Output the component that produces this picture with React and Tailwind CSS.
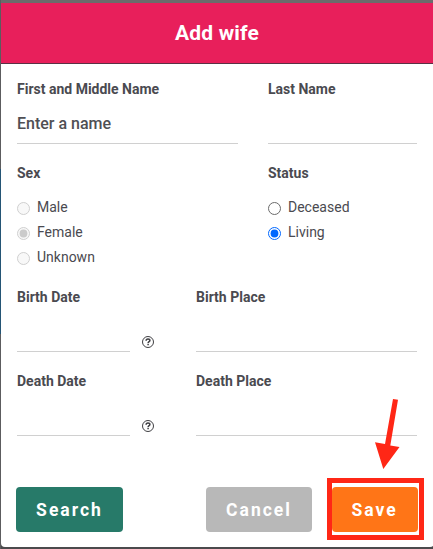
import React, { useState } from "react";

function Label({ children }) {
  return (
    <div className="h-[18px] text-[14px] leading-[18px] font-bold whitespace-nowrap">
      {children}
    </div>
  );
}

function Field({ label, className = "", placeholder }) {
  return (
    <div className={className}>
      <Label>{label}</Label>
      <input
        type="text"
        aria-label={label}
        placeholder={placeholder}
        className="mt-[7px] block h-[39px] w-full border-b border-[#d0d0d0] bg-transparent pb-px text-[16px] font-medium outline-none placeholder:text-[#4f4f54] placeholder:opacity-100"
      />
    </div>
  );
}

function HelpIcon() {
  return (
    <svg viewBox="0 0 12 12" className="mb-[4px] ml-3 size-3" fill="none" stroke="#3f3f43">
      <circle cx="6" cy="6" r="5.5" strokeWidth="1" />
      <path d="M4.1 4.7C4.1 3.5 5 2.9 6 2.9s1.9.6 1.9 1.6C7.9 5.7 6.1 5.7 6.1 7.1" strokeWidth="1.5" />
      <path d="M6.1 7.8v1.5" strokeWidth="1.5" />
    </svg>
  );
}

function DateField({ label }) {
  return (
    <div className="flex w-[179px] items-end">
      <Field label={label} className="w-[113px]" />
      <HelpIcon />
    </div>
  );
}

function Radio({ label, checked, disabled, onSelect }) {
  let ring = "#6b6b6b";
  let dot = "#0068ff";
  if (checked) ring = dot;
  if (disabled) {
    ring = "#cfcfcf";
    dot = "#cbcbcb";
  }

  return (
    <button
      type="button"
      role="radio"
      aria-checked={checked}
      disabled={disabled}
      onClick={onSelect}
      className="flex h-[25px] items-center text-[14px]"
    >
      <svg viewBox="0 0 13 13" className="mr-[7px] size-[13px]">
        <circle cx="6.5" cy="6.5" r="6" fill={disabled ? "#f8f8f8" : "#fff"} stroke={ring} />
        {checked && <circle cx="6.5" cy="6.5" r="3.9" fill={dot} />}
      </svg>
      <span className="relative -top-px">{label}</span>
    </button>
  );
}

export default function App() {
  const [status, setStatus] = useState("Living");

  return (
    <div className="flex h-[549px] w-[433px] overflow-hidden bg-[#4b4a4c] font-['Roboto',sans-serif] text-[#4a4a50]">
      <div className="flex w-px shrink-0 flex-col bg-[#5c5c5e]">
        <div className="mt-[169px] h-[165px] bg-[#245575]" />
      </div>
      <div className="flex flex-1 flex-col border-t-[3px] border-[#6b6b6b]">
        <h1 className="h-[61px] border-b border-[#5b3145] bg-[#e81f5b] pr-px text-center text-[21px] leading-[60px] font-bold tracking-[0.15px] text-white">
          Add wife
        </h1>

        <form className="h-[483px] rounded-b-[4px] bg-white px-4 pt-4">
          <div className="flex">
            <Field label="First and Middle Name" placeholder="Enter a name" className="w-[221px]" />
            <Field label="Last Name" className="ml-[30px] w-[149px]" />
          </div>

          <div className="mt-5 flex h-[124px]">
            <div className="w-[251px]">
              <Label>Sex</Label>
              <div role="radiogroup" className="mt-[14px]">
                <Radio label="Male" disabled checked={false} />
                <Radio label="Female" disabled checked />
                <Radio label="Unknown" disabled checked={false} />
              </div>
            </div>
            <div>
              <Label>Status</Label>
              <div role="radiogroup" className="mt-[14px]">
                {["Deceased", "Living"].map((s) => (
                  <Radio key={s} label={s} checked={status === s} onSelect={() => setStatus(s)} />
                ))}
              </div>
            </div>
          </div>

          <div className="flex">
            <DateField label="Birth Date" />
            <Field label="Birth Place" className="w-[221px]" />
          </div>
          <div className="mt-5 flex">
            <DateField label="Death Date" />
            <Field label="Death Place" className="w-[221px]" />
          </div>

          <div className="mt-[51px] -ml-px flex text-[17.5px] font-bold tracking-[2px] text-white">
            <button type="button" className="h-[45px] w-[107px] rounded-[4px] bg-[#277a69] pt-[2px]">
              Search
            </button>
            <button type="button" className="ml-[83px] h-[45px] w-[106px] rounded-[4px] bg-[#b8b8b8] pt-[2px]">
              Cancel
            </button>
            <div className="relative ml-5">
              <button type="button" className="h-[45px] w-[86px] rounded-[4px] bg-[#ff7517] pt-[2px] pr-px">
                Save
              </button>
              {/* callout around the save button */}
              <div className="pointer-events-none absolute -top-[9px] -left-[5px] h-[62px] w-[97px] border-[5px] border-[#ff2716]" />
              <svg
                viewBox="374 398 28 72"
                className="pointer-events-none absolute -top-[89px] left-[42px] h-[72px] w-[28px]"
                fill="#ff2716"
              >
                <path d="M393 399l5 .8-7.7 45.6 9.2 1.6-16.2 22-8.3-26.8 10 1.7z" />
              </svg>
            </div>
          </div>
        </form>
      </div>
    </div>
  );
}
